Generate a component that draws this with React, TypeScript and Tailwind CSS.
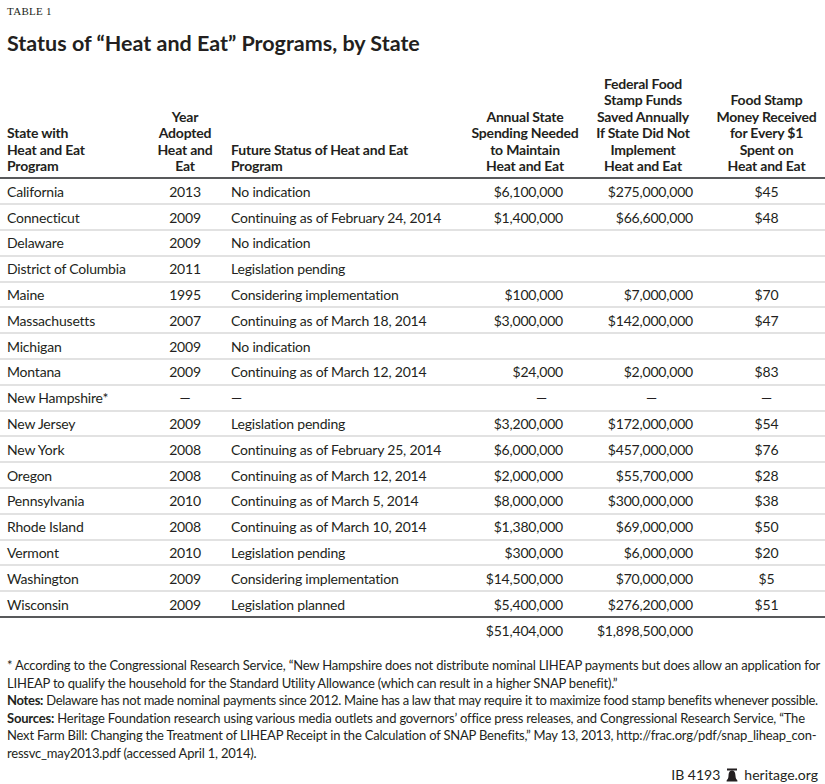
import React from 'react';

type Row = {
  state: string;
  year: string;
  status: string;
  spending: string;
  saved: string;
  perDollar: string;
};

const rows: Row[] = [
  { state: 'California', year: '2013', status: 'No indication', spending: '$6,100,000', saved: '$275,000,000', perDollar: '$45' },
  { state: 'Connecticut', year: '2009', status: 'Continuing as of February 24, 2014', spending: '$1,400,000', saved: '$66,600,000', perDollar: '$48' },
  { state: 'Delaware', year: '2009', status: 'No indication', spending: '', saved: '', perDollar: '' },
  { state: 'District of Columbia', year: '2011', status: 'Legislation pending', spending: '', saved: '', perDollar: '' },
  { state: 'Maine', year: '1995', status: 'Considering implementation', spending: '$100,000', saved: '$7,000,000', perDollar: '$70' },
  { state: 'Massachusetts', year: '2007', status: 'Continuing as of March 18, 2014', spending: '$3,000,000', saved: '$142,000,000', perDollar: '$47' },
  { state: 'Michigan', year: '2009', status: 'No indication', spending: '', saved: '', perDollar: '' },
  { state: 'Montana', year: '2009', status: 'Continuing as of March 12, 2014', spending: '$24,000', saved: '$2,000,000', perDollar: '$83' },
  { state: 'New Hampshire*', year: '—', status: '—', spending: '—', saved: '—', perDollar: '—' },
  { state: 'New Jersey', year: '2009', status: 'Legislation pending', spending: '$3,200,000', saved: '$172,000,000', perDollar: '$54' },
  { state: 'New York', year: '2008', status: 'Continuing as of February 25, 2014', spending: '$6,000,000', saved: '$457,000,000', perDollar: '$76' },
  { state: 'Oregon', year: '2008', status: 'Continuing as of March 12, 2014', spending: '$2,000,000', saved: '$55,700,000', perDollar: '$28' },
  { state: 'Pennsylvania', year: '2010', status: 'Continuing as of March 5, 2014', spending: '$8,000,000', saved: '$300,000,000', perDollar: '$38' },
  { state: 'Rhode Island', year: '2008', status: 'Continuing as of March 10, 2014', spending: '$1,380,000', saved: '$69,000,000', perDollar: '$50' },
  { state: 'Vermont', year: '2010', status: 'Legislation pending', spending: '$300,000', saved: '$6,000,000', perDollar: '$20' },
  { state: 'Washington', year: '2009', status: 'Considering implementation', spending: '$14,500,000', saved: '$70,000,000', perDollar: '$5' },
  { state: 'Wisconsin', year: '2009', status: 'Legislation planned', spending: '$5,400,000', saved: '$276,200,000', perDollar: '$51' },
];

const Bell = () => (
  <svg width="12" height="14" viewBox="0 0 12 14" className="inline-block">
    <rect x="1" y="0.5" width="10" height="2" fill="#231f20" />
    <path d="M6 2.5 C3.2 2.5 2.6 5 2.5 8 C2.4 10.2 1.6 11.4 0.6 12.4 L0.6 13.5 L11.4 13.5 L11.4 12.4 C10.4 11.4 9.6 10.2 9.5 8 C9.4 5 8.8 2.5 6 2.5 Z" fill="#231f20" />
  </svg>
);

export default function App() {
  return (
    <div className="w-[825px] h-[784px] bg-white text-[#231f20] font-['Lato','Open_Sans',sans-serif] overflow-hidden">
      <div className="pl-[7px] pt-[4px] font-['Liberation_Serif',serif] text-[11px] leading-[14px] tracking-[0.3px]">
        TABLE 1
      </div>
      <h1 className="pl-[7px] mt-[12px] text-[21.5px] leading-[26px] font-bold">
        Status of “Heat and Eat” Programs, by State
      </h1>

      <table className="table-fixed border-collapse mt-[20px] w-[825px] text-[14px] tracking-[-0.2px]">
        <colgroup>
          <col className="w-[150px]" />
          <col className="w-[70px]" />
          <col className="w-[245px]" />
          <col className="w-[120px]" />
          <col className="w-[116px]" />
          <col className="w-[124px]" />
        </colgroup>
        <thead>
          <tr className="border-b-2 border-[#58595b] font-bold leading-[16.4px] align-bottom">
            <th className="text-left font-bold pl-[7px] pb-[3px]">
              State with<br />Heat and Eat<br />Program
            </th>
            <th className="text-center font-bold pb-[3px]">
              Year<br />Adopted<br />Heat and<br />Eat
            </th>
            <th className="text-left font-bold pl-[11px] pb-[3px]">
              Future Status of Heat and Eat<br />Program
            </th>
            <th className="text-center font-bold pb-[3px]">
              Annual State<br />Spending Needed<br />to Maintain<br />Heat and Eat
            </th>
            <th className="text-center font-bold pb-[3px]">
              Federal Food<br />Stamp Funds<br />Saved Annually<br />If State Did Not<br />Implement<br />Heat and Eat
            </th>
            <th className="text-center font-bold pl-[7px] pb-[3px]">
              Food Stamp<br />Money Received<br />for Every $1<br />Spent on<br />Heat and Eat
            </th>
          </tr>
        </thead>
        <tbody>
          {rows.map((r, i) => (
            <tr
              key={r.state}
              className={
                i === rows.length - 1
                  ? 'h-[25.8px] border-b-2 border-[#58595b]'
                  : 'h-[25.8px] border-b-2 border-[#e2e2e2]'
              }
            >
              <td className="pl-[7px]">{r.state}</td>
              <td className="text-center">{r.year}</td>
              <td className="pl-[11px]">{r.status}</td>
              <td className="text-right pr-[22px]">{r.spending === '—' ? <span className="pr-[16px]">—</span> : r.spending}</td>
              <td className="text-right pr-[8px]">{r.saved === '—' ? <span className="pr-[36px]">—</span> : r.saved}</td>
              <td className="text-center pl-[7px]">{r.perDollar}</td>
            </tr>
          ))}
          <tr className="h-[26px]">
            <td />
            <td />
            <td />
            <td className="text-right pr-[22px]">$51,404,000</td>
            <td className="text-right pr-[8px]">$1,898,500,000</td>
            <td />
          </tr>
        </tbody>
      </table>

      <div className="px-[7px] mt-[14px] text-[13px] leading-[17.6px] tracking-[-0.2px] whitespace-nowrap">
        <div>* According to the Congressional Research Service, “New Hampshire does not distribute nominal LIHEAP payments but does allow an application for</div>
        <div>LIHEAP to qualify the household for the Standard Utility Allowance (which can result in a higher SNAP benefit).”</div>
        <div className="tracking-[-0.3px]">
          <span className="font-bold">Notes:</span> Delaware has not made nominal payments since 2012. Maine has a law that may require it to maximize food stamp benefits whenever possible.
        </div>
        <div>
          <span className="font-bold">Sources:</span> Heritage Foundation research using various media outlets and governors’ office press releases, and Congressional Research Service, “The
        </div>
        <div>Next Farm Bill: Changing the Treatment of LIHEAP Receipt in the Calculation of SNAP Benefits,” May 13, 2013, http://frac.org/pdf/snap_liheap_con-</div>
        <div>ressvc_may2013.pdf (accessed April 1, 2014).</div>
      </div>

      <div className="flex justify-end items-center gap-[6px] pr-[7px] mt-[3px] text-[14px] leading-[18px]">
        <span>IB 4193</span>
        <Bell />
        <span>heritage.org</span>
      </div>
    </div>
  );
}
